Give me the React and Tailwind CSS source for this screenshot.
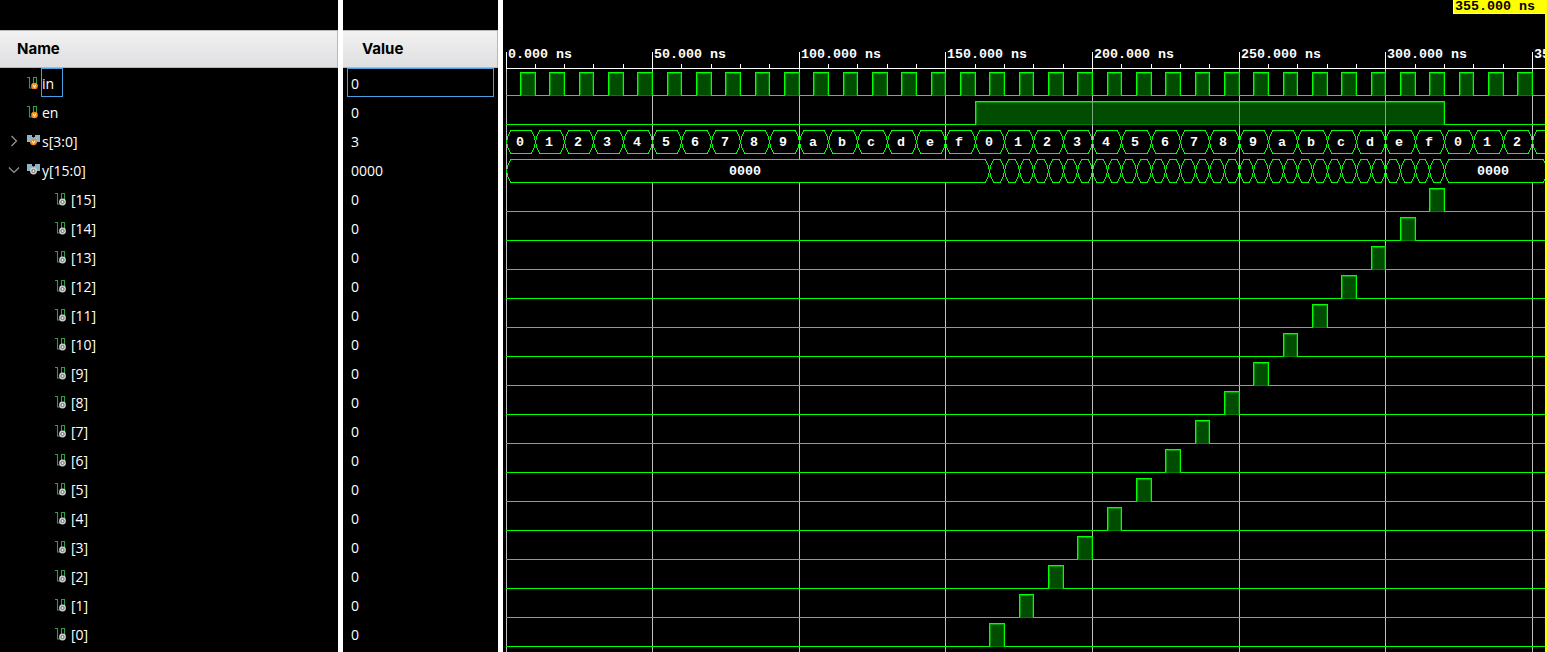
import React from "react";

const ROW = 29;
const px = (t) => Math.floor(t * 2.9325 + 2); // ns -> column, origin at the pane's left edge
const GREEN = "#00ff00";

const signals = [
  { name: "in", value: "0", kind: "input", selected: true },
  { name: "en", value: "0", kind: "input" },
  { name: "s[3:0]", value: "3", kind: "busInput", caret: "right" },
  { name: "y[15:0]", value: "0000", kind: "busOutput", caret: "down" },
  ...Array.from({ length: 16 }, (_, i) => ({ name: `[${15 - i}]`, value: "0", kind: "output", child: true })),
];

function Badge({ x, y, input }) {
  return input ? (
    <g>
      <circle cx={x} cy={y} r="3.3" fill="#f28c1e" />
      <path d={`M${x - 1.4} ${y - 1.3}L${x} ${y + 1.4}L${x + 1.4} ${y - 1.3}`} fill="none" stroke="#fff" strokeWidth="1" />
    </g>
  ) : (
    <g>
      <circle cx={x} cy={y} r="3.4" fill="#d2d2d2" />
      <circle cx={x} cy={y} r="1.6" fill="#eee" stroke="#666" strokeWidth="1" />
    </g>
  );
}

function SignalIcon({ kind }) {
  const input = kind === "input" || kind === "busInput";
  if (kind.startsWith("bus")) {
    return (
      <svg width="14" height="14" viewBox="0 0 14 14" className="shrink-0">
        <path d="M0 1h5v2h3V1h5v7h-2.5V9h-8V8H0z" fill="#8fb4c8" />
        <path d="M5 1l1.5 3L8 1z" fill="#000" />
        <path d="M0 8h3v2H0zM10 8h3v2h-3z" fill="#000" />
        <Badge x={6.5} y={8} input={input} />
      </svg>
    );
  }
  return (
    <svg width="14" height="14" viewBox="0 0 14 14" className="shrink-0">
      <path d="M0 1.5h2.5V12H6.5V1.5H9.5V8" fill="none" stroke="#2f9e44" strokeWidth="1.1" />
      <Badge x={7.5} y={10} input={input} />
    </svg>
  );
}

function Caret({ dir }) {
  return (
    <svg width="12" height="12" viewBox="0 0 12 12" className="shrink-0">
      <path d={dir === "right" ? "M3.5 1L8.5 6L3.5 11" : "M1 3.5L6 8.5L11 3.5"} fill="none" stroke="#999" strokeWidth="1.2" />
    </svg>
  );
}

function Header({ children, pad }) {
  return (
    <div className={`flex h-[38px] shrink-0 items-center border-t border-r border-b border-[#b8b8b8] bg-linear-to-b from-[#f2f2f2] to-[#dfdfe1] text-[15px] font-bold text-black ${pad}`}>
      {children}
    </div>
  );
}

function Pulse({ a, b, row }) {
  const x0 = px(a);
  const x1 = px(b);
  const y = 72 + row * ROW;
  return (
    <g>
      <rect x={x0} y={y} width={x1 - x0 + 1} height="24" fill="#004c00" />
      <path d={`M${x0 + 1.5} ${y + 23}V${y + 1.5}H${x1}`} fill="none" stroke="#009900" />
      <path d={`M${x0 + 1} ${y + 23.5}H${x1 - 0.5}V${y + 2}`} fill="none" stroke="#008000" />
      <path d={`M${x0 + 0.5} ${y + 24}V${y + 0.5}H${x1 + 0.5}V${y + 24}`} fill="none" stroke={GREEN} />
    </g>
  );
}

function Baseline({ row, gaps }) {
  const y = 95.5 + row * ROW;
  let x = 2;
  let d = "";
  gaps.forEach(([a, b]) => {
    d += `M${x} ${y}H${px(a) + 1}`;
    x = px(b);
  });
  d += `M${x} ${y}H1041`;
  return <path d={d} stroke={GREEN} fill="none" />;
}

function Bus({ edges, row }) {
  const y0 = 72.5 + row * ROW;
  return edges.slice(0, -1).map((t, i) => {
    const a = px(t) + 0.5;
    const b = px(edges[i + 1]) + 0.5;
    return (
      <path
        key={t}
        d={`M${a} ${y0 + 11.5}L${a + 1} ${y0 + 7}L${a + 4} ${y0}H${b - 4}L${b - 1} ${y0 + 7}L${b} ${y0 + 11.5}L${b - 1} ${y0 + 16}L${b - 4} ${y0 + 23}H${a + 4}L${a + 1} ${y0 + 16}Z`}
        fill="#000"
        stroke={GREEN}
      />
    );
  });
}

function Label({ x, y, children, fill = "#fff", anchor = "start" }) {
  return (
    <text x={x} y={y} fill={fill} textAnchor={anchor} fontFamily="'Liberation Mono', monospace" fontWeight="700" fontSize="13.33">
      {children}
    </text>
  );
}

const clock = Array.from({ length: 35 }, (_, i) => [5 + i * 10, 10 + i * 10]);
const sEdges = Array.from({ length: 37 }, (_, i) => i * 10);
const yEdges = [0, ...Array.from({ length: 32 }, (_, i) => 165 + i * 5), 355];
const majors = [0, 50, 100, 150, 200, 250, 300, 350];

function Waves() {
  return (
    <svg width="1043" height="652" viewBox="0 0 1043 652" shapeRendering="crispEdges" className="block">
      {majors.map((t) => <rect key={t} x={px(t)} y="69" width="1" height="583" fill="#c0c0c0" />)}
      <rect x="2" y="68" width="1039" height="1" fill="#fff" />
      {Array.from({ length: 36 }, (_, i) => (
        <rect key={i} x={px(i * 10)} y={i % 5 ? 64 : 52} width="1" height={i % 5 ? 4 : 16} fill="#fff" />
      ))}
      {majors.map((t) => <Label key={t} x={px(t) + 2} y={58}>{`${t}.000 ns`}</Label>)}

      <Baseline row={0} gaps={clock} />
      {clock.map(([a, b]) => <Pulse key={a} a={a} b={b} row={0} />)}
      <Baseline row={1} gaps={[[160, 320]]} />
      <Pulse a={160} b={320} row={1} />
      {[200, 250, 300].map((t) => <rect key={t} x={px(t)} y="102" width="1" height="23" fill="#80a680" />)}

      <Bus edges={sEdges} row={2} />
      {sEdges.slice(0, 35).map((t, i) => (
        <Label key={t} x={px(t) + 14} y={146} anchor="middle">{(i % 16).toString(16)}</Label>
      ))}
      <Bus edges={yEdges} row={3} />
      {majors.slice(4, 7).map((t) => <rect key={t} x={px(t)} y="159" width="1" height="24" fill="#80df80" />)}
      <Label x={241} y={175} anchor="middle">0000</Label>
      <Label x={989} y={175} anchor="middle">0000</Label>

      {Array.from({ length: 16 }, (_, i) => {
        const t = 315 - i * 10;
        return (
          <g key={t}>
            <Baseline row={4 + i} gaps={[[t, t + 5]]} />
            <Pulse a={t} b={t + 5} row={4 + i} />
          </g>
        );
      })}

      <rect x="1041" y="0" width="2" height="652" fill="#ff0" />
      <rect x="949" y="0" width="94" height="14" fill="#ff0" />
      <path d="M949.5 0V13.5H1041" fill="none" stroke="#fff" />
      <Label x={951} y={10} fill="#000">355.000 ns</Label>
    </svg>
  );
}

export default function App() {
  return (
    <div className="flex h-[652px] w-[1547px] overflow-hidden bg-black font-['Open_Sans','Noto_Sans',sans-serif] text-[14px] text-white">
      <div className="flex w-[338px] shrink-0 flex-col pt-[30px]">
        <Header pad="pl-[17px] font-['Inter',sans-serif]">Name</Header>
        {signals.map((s) => (
          <div key={s.name} className={`flex h-[29px] shrink-0 items-center ${s.child ? "pl-[55px]" : "pl-2"}`}>
            {!s.child && <span className="flex w-[19px] shrink-0">{s.caret && <Caret dir={s.caret} />}</span>}
            <SignalIcon kind={s.kind} />
            <span className={`flex h-[29px] items-center border pt-[2px] pr-2 ${s.child ? "ml-[1px]" : ""} ${s.selected ? "border-[#4a9fe0]" : "border-transparent"}`}>
              {s.name}
            </span>
          </div>
        ))}
      </div>
      <div className="w-[5px] shrink-0 bg-white" />
      <div className="flex w-[155px] shrink-0 flex-col pt-[30px]">
        <Header pad="pl-[19px] font-['Inter',sans-serif]">Value</Header>
        {signals.map((s) => (
          <div key={s.name} className={`mr-1 ml-1 flex h-[29px] shrink-0 items-center border pt-[2px] pl-[3px] ${s.selected ? "border-[#4a9fe0]" : "border-transparent"}`}>
            {s.value}
          </div>
        ))}
      </div>
      <div className="w-[5px] shrink-0 bg-white" />
      <div className="w-px shrink-0" />
      <Waves />
    </div>
  );
}
